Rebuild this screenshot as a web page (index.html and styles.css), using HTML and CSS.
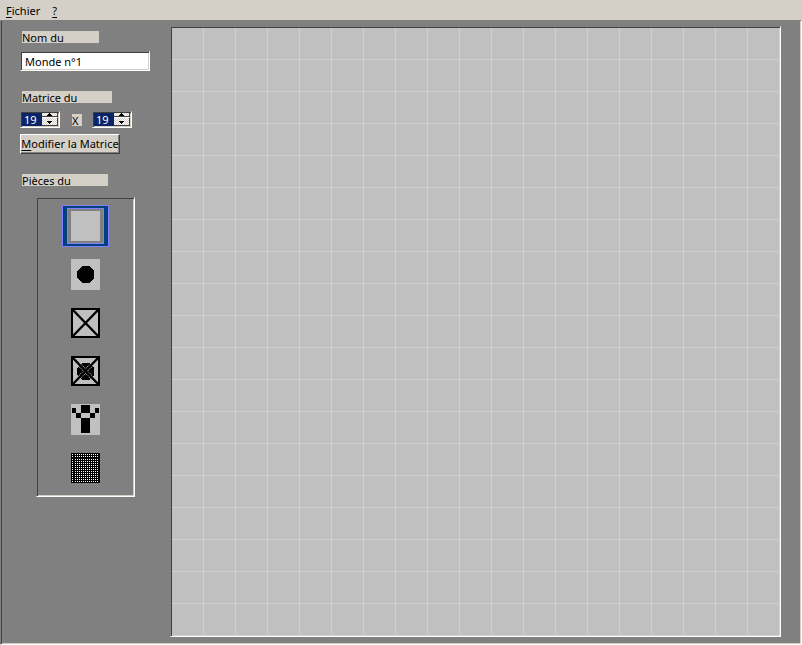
FILE: index.html
```
<!DOCTYPE html>
<html lang="fr">
<head>
<meta charset="utf-8">
<title>Monde n°1</title>
<link rel="stylesheet" href="styles.css">
</head>
<body>
<nav class="menubar">
  <button type="button" class="menu"><u>F</u>ichier</button>
  <button type="button" class="menu"><u>?</u></button>
</nav>
<main class="workspace">
  <form class="sidebar">
    <label class="caption caption-name" for="name">Nom du</label>
    <input class="name sunken" id="name" type="text" value="Monde n°1">
    <label class="caption caption-matrix" for="cols">Matrice du</label>
    <div class="dimensions">
      <div class="spin sunken">
        <input id="cols" type="text" inputmode="numeric" value="19">
        <div class="arrows">
          <button type="button" class="up" aria-label="Plus de colonnes"><svg viewBox="0 0 5 3"><path d="M2 0h1v1h1v1h1v1H0V2h1V1h1z"/></svg></button>
          <button type="button" class="down" aria-label="Moins de colonnes"><svg viewBox="0 0 5 3"><path d="M0 0h5v1H4v1H3v1H2V2H1V1H0z"/></svg></button>
        </div>
      </div>
      <label class="caption times" for="rows">X</label>
      <div class="spin sunken">
        <input id="rows" type="text" inputmode="numeric" value="19">
        <div class="arrows">
          <button type="button" class="up" aria-label="Plus de lignes"><svg viewBox="0 0 5 3"><path d="M2 0h1v1h1v1h1v1H0V2h1V1h1z"/></svg></button>
          <button type="button" class="down" aria-label="Moins de lignes"><svg viewBox="0 0 5 3"><path d="M0 0h5v1H4v1H3v1H2V2H1V1H0z"/></svg></button>
        </div>
      </div>
    </div>
    <button type="button" class="apply"><u>M</u>odifier la Matrice</button>
    <div class="caption caption-pieces">Pièces du</div>
    <div class="pieces sunken">
      <button type="button" class="piece selected" aria-label="Sol"><span class="frame"><svg width="29" height="30"><path fill="#c0c0c0" d="M0 0h29v30H0z"/></svg></span></button>
      <button type="button" class="piece" aria-label="Boule"><svg width="29" height="31" shape-rendering="crispEdges"><path fill="#c0c0c0" d="M0 0h29v31H0z"/><path d="M11 7h7l5 5v7l-5 5h-7l-5-5v-7z"/></svg></button>
      <button type="button" class="piece" aria-label="Caisse"><svg width="29" height="30"><path fill="#c0c0c0" stroke="#000" stroke-width="2" d="M1 1h27v28H1z"/><path stroke="#000" stroke-width="2.400" d="M1 1l27 28M28 1L1 29"/></svg></button>
      <button type="button" class="piece" aria-label="Caisse sur boule"><svg width="29" height="30"><path fill="#c0c0c0" stroke="#000" stroke-width="2" d="M1 1h27v28H1z"/><path d="M11 7h7l5 5v7l-5 5h-7l-5-5v-7z" shape-rendering="crispEdges"/><path stroke="#c0c0c0" stroke-width="4" stroke-dasharray="1 1" d="M4 4l21 22M25 4L4 26"/><path stroke="#000" stroke-width="2.400" d="M1 1l27 28M28 1L1 29"/></svg></button>
      <button type="button" class="piece" aria-label="Joueur"><svg width="29" height="31"><path fill="#c0c0c0" d="M0 0h29v31H0z"/><path d="M10 1h9v8h-9zM1 4h4v5H1zM24 4h4v5h-4zM5 9h5v5H5zM19 9h5v5h-5zM10 14h9v15h-9z"/></svg></button>
      <button type="button" class="piece" aria-label="Mur"><svg width="29" height="30"><path d="M0 0h29v30H0z"/><g stroke="#fff" stroke-dasharray="1 2 1 1 1 1 1 1 1 1 1 1 1 1 1 1 1 1 1 1 1 1 1 1 1 2"><path d="M1 1.500h27M1 3.500h27M1 6.500h27M1 8.500h27M1 10.500h27M1 12.500h27M1 14.500h27M1 16.500h27M1 18.500h27M1 20.500h27M1 22.500h27M1 24.500h27M1 26.500h27M1 28.500h27"/></g></svg></button>
    </div>
  </form>
  <section class="matrix sunken" aria-label="Matrice"></section>
</main>
</body>
</html>
```
FILE: styles.css
```
* { box-sizing: border-box; }

body {
  margin: 0;
  min-height: 100vh;
  display: flex;
  flex-direction: column;
  background: #808080;
  color: #000;
  font: 11px/16px "Noto Sans", sans-serif;
}

button, input {
  margin: 0;
  padding: 0;
  border: 0;
  border-radius: 0;
  background: none;
  color: inherit;
  font: inherit;
}

u { text-underline-offset: 2px; }

svg { display: block; }

.menubar {
  display: flex;
  gap: 12px;
  height: 20px;
  padding: 3px 6px 0;
  background: #d4d0c8;
}

.menu { height: 16px; }

.workspace {
  flex: 1;
  display: flex;
  align-items: flex-start;
  padding: 5px 20px 6px 19px;
  border: 1px solid;
  border-color: #808080 #fff #fff #808080;
  box-shadow: inset 1px 0 #404040, inset -1px -1px #d4d0c8;
}

.sunken {
  border: 1px solid;
  border-color: #808080 #fff #fff #808080;
  box-shadow: inset 1px 1px #404040, inset -1px -1px #d4d0c8;
}

.sidebar {
  width: 150px;
  display: flex;
  flex-direction: column;
  align-items: flex-start;
}

.caption {
  height: 12px;
  line-height: 14px;
  margin-left: 2px;
  background: #d4d0c8;
}

.caption-name { width: 77px; margin-top: 5px; }

.name {
  width: 130px;
  height: 20px;
  margin: 8px 0 20px;
  padding: 0 4px;
  background: #fff;
}

.caption-matrix { width: 90px; }

.dimensions {
  display: flex;
  align-items: flex-start;
  margin: 8px 0 6px;
}

.spin {
  display: flex;
  width: 40px;
  height: 17px;
  padding: 1px;
  background: #d4d0c8;
}

.spin input {
  width: 20px;
  height: 13px;
  padding-left: 2px;
  background: #0a246a;
  color: #fff;
}

.arrows {
  flex: 1;
  display: flex;
  flex-direction: column;
}

.arrows button {
  display: flex;
  align-items: center;
  justify-content: center;
  border: solid #404040;
  border-width: 0 1px 1px 0;
  background: repeating-conic-gradient(#fff 0 25%, #d4d0c8 0 50%) 0 0 / 2px 2px;
}

.up { height: 4px; }

.down { flex: 1; }

.arrows .down {
  align-items: flex-end;
  padding-bottom: 1px;
  border-top: 1px solid #fff;
}

.arrows svg { width: 5px; height: 3px; }

.times { width: 10px; margin: 3px 10px 0 12px; }

.apply {
  min-width: 100px;
  height: 20px;
  border: 1px solid;
  border-color: #fff #404040 #404040 #fff;
  box-shadow: inset -1px -1px #808080;
  background: #d4d0c8;
  white-space: nowrap;
  display: flex;
  align-items: center;
  justify-content: center;
}

.caption-pieces { width: 86px; margin-top: 20px; }

.pieces {
  width: 99px;
  height: 300px;
  margin: 11px 0 0 16px;
  padding: 7px 0;
  display: flex;
  flex-direction: column;
  align-items: center;
  justify-content: space-between;
}

.piece {
  width: 47px;
  height: 42px;
  display: flex;
  align-items: center;
  justify-content: center;
}

.selected {
  border: 1px solid #8080ff;
  background: #004080;
}

.frame {
  padding: 2px 3px;
  border: 1px solid #8080ff;
  background: #808080;
}

.matrix {
  flex: 1;
  aspect-ratio: 1;
  background:
    linear-gradient(90deg, transparent 31px, #d0d0d0 31px) 1px 1px / 32px 32px,
    linear-gradient(#c0c0c0 31px, #d0d0d0 31px) 1px 1px / 32px 32px;
}
```
